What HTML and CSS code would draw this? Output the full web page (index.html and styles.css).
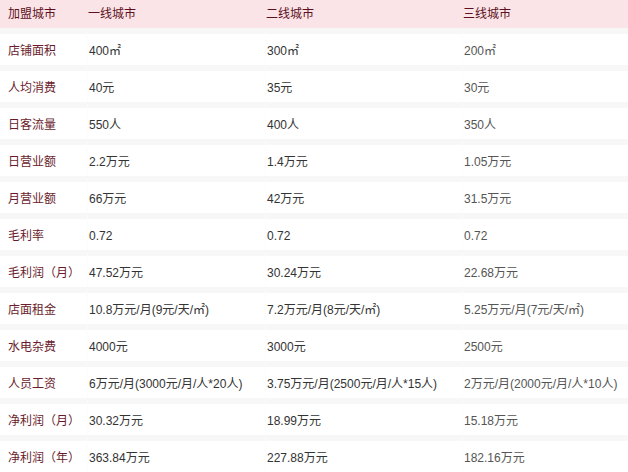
FILE: index.html
```html
<!DOCTYPE html>
<html lang="zh">
<head>
<meta charset="utf-8">
<link rel="stylesheet" href="styles.css">
</head>
<body>
<table class="cmp">
  <colgroup>
    <col class="c1"><col class="c2"><col class="c3"><col class="c4">
  </colgroup>
  <thead>
    <tr><th>加盟城市</th><th>一线城市</th><th>二线城市</th><th>三线城市</th></tr>
  </thead>
  <tbody>
    <tr><td>店铺面积</td><td>400㎡</td><td>300㎡</td><td>200㎡</td></tr>
    <tr><td>人均消费</td><td>40元</td><td>35元</td><td>30元</td></tr>
    <tr><td>日客流量</td><td>550人</td><td>400人</td><td>350人</td></tr>
    <tr><td>日营业额</td><td>2.2万元</td><td>1.4万元</td><td>1.05万元</td></tr>
    <tr><td>月营业额</td><td>66万元</td><td>42万元</td><td>31.5万元</td></tr>
    <tr><td>毛利率</td><td>0.72</td><td>0.72</td><td>0.72</td></tr>
    <tr><td>毛利润（月）</td><td>47.52万元</td><td>30.24万元</td><td>22.68万元</td></tr>
    <tr><td>店面租金</td><td>10.8万元/月(9元/天/㎡)</td><td>7.2万元/月(8元/天/㎡)</td><td>5.25万元/月(7元/天/㎡)</td></tr>
    <tr><td>水电杂费</td><td>4000元</td><td>3000元</td><td>2500元</td></tr>
    <tr><td>人员工资</td><td>6万元/月(3000元/月/人*20人)</td><td>3.75万元/月(2500元/月/人*15人)</td><td>2万元/月(2000元/月/人*10人)</td></tr>
    <tr><td>净利润（月）</td><td>30.32万元</td><td>18.99万元</td><td>15.18万元</td></tr>
    <tr><td>净利润（年）</td><td>363.84万元</td><td>227.88万元</td><td>182.16万元</td></tr>
  </tbody>
</table>
</body>
</html>
```

FILE: styles.css
```css
html, body {
  margin: 0;
  padding: 0;
  background: #ffffff;
}
body {
  font-family: "Liberation Sans", "Noto Sans CJK SC", sans-serif;
  font-size: 12px;
  line-height: 16px;
  color: #333333;
}
.cmp {
  width: 628px;
  border-collapse: separate;
  border-spacing: 0;
  table-layout: fixed;
}
.c1 { width: 87px; }
.c2 { width: 178px; }
.c3 { width: 197px; }
.c4 { width: 166px; }

.cmp th {
  background: #fbe4e7;
  color: #5c1020;
  font-weight: normal;
  text-align: left;
  height: 28px;
  padding: 0 0 0 1px;
  box-sizing: border-box;
  vertical-align: middle;
}
.cmp th:first-child {
  padding-left: 8px;
}
.cmp td {
  height: 37px;
  box-sizing: border-box;
  padding: 2px 0 0 1px;
  border-top: 6px solid #f7f7f7;
  border-left: 1px solid #fcfcfc;
  vertical-align: middle;
  white-space: nowrap;
}
.cmp td:first-child {
  padding-left: 8px;
  border-left: none;
  color: #6a1c2c;
}
.cmp td:last-child {
  color: #555555;
}
```
